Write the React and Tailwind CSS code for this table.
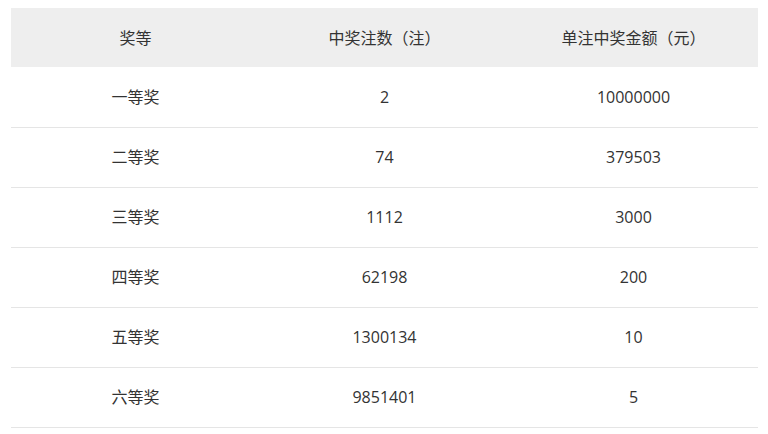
const rows = [
  ["一等奖", "2", "10000000"],
  ["二等奖", "74", "379503"],
  ["三等奖", "1112", "3000"],
  ["四等奖", "62198", "200"],
  ["五等奖", "1300134", "10"],
  ["六等奖", "9851401", "5"],
];

export default function App() {
  return (
    <div className="bg-white w-[768px] h-[434px] pt-[8px] pl-[11px] font-['Open_Sans','Noto_Sans_CJK_SC',sans-serif] text-[16px] text-[#333]">
      <table className="w-[747px] border-collapse text-center">
        <thead>
          <tr className="bg-[#eeeeee] h-[59px]">
            <th className="font-normal w-1/3">奖等</th>
            <th className="font-normal w-1/3">中奖注数（注）</th>
            <th className="font-normal w-1/3">单注中奖金额（元）</th>
          </tr>
        </thead>
        <tbody>
          {rows.map((r) => (
            <tr key={r[0]} className="h-[60px] border-b border-[#e5e5e5]">
              {r.map((c, i) => (
                <td key={i}>{c}</td>
              ))}
            </tr>
          ))}
        </tbody>
      </table>
    </div>
  );
}
